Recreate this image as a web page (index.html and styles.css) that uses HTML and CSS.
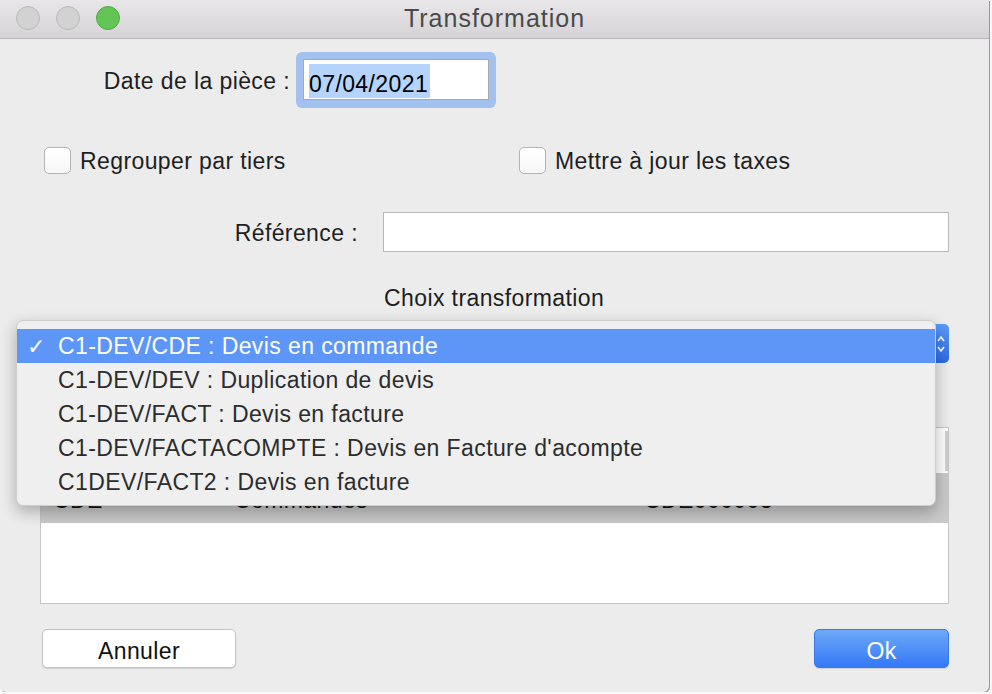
FILE: index.html
```html
<!DOCTYPE html>
<html lang="fr">
<head>
    <meta charset="UTF-8">
    <title>Transformation</title>
    <link rel="stylesheet" href="styles.css">
</head>
<body>
    <div class="window">
        <!-- barre de titre -->
        <div class="titlebar">
            <div class="lights">
                <span class="light"></span>
                <span class="light"></span>
                <span class="light green"></span>
            </div>
            <div class="title">Transformation</div>
            <div></div>
        </div>

        <div class="content">
            <div class="date-row">
                <label class="date-label">Date de la pièce :</label>
                <div class="focus-ring">
                    <div class="date-input"><span class="selected">07/04/2021</span></div>
                </div>
            </div>

            <div class="check-row">
                <div class="check first"><span class="box"></span>Regrouper par tiers</div>
                <div class="check"><span class="box"></span>Mettre à jour les taxes</div>
            </div>

            <div class="ref-row">
                <label class="ref-label">Référence :</label>
                <div class="text-input"></div>
            </div>

            <div class="choix">Choix transformation</div>

            <div class="popup">
                <span class="popup-cap">
                    <svg width="10" height="22" viewBox="0 0 10 22"><path d="M2 8 L5 4 L8 8 M2 14 L5 18 L8 14" fill="none" stroke="#fff" stroke-width="1.6"/></svg>
                </span>
            </div>

            <div class="table">
                <div class="table-head"><span class="resizer"></span></div>
                <div class="table-row">
                    <span class="col1">CDE</span>
                    <span class="col2">Commandes</span>
                    <span class="col3">CDE000003</span>
                </div>
            </div>

            <div class="buttons">
                <button class="btn">Annuler</button>
                <button class="btn primary">Ok</button>
            </div>
        </div>

        <!-- menu déroulant ouvert -->
        <div class="menu">
            <div class="menu-item active"><span class="tick">✓</span>C1-DEV/CDE : Devis en commande</div>
            <div class="menu-item"><span class="tick"></span>C1-DEV/DEV : Duplication de devis</div>
            <div class="menu-item"><span class="tick"></span>C1-DEV/FACT : Devis en facture</div>
            <div class="menu-item"><span class="tick"></span>C1-DEV/FACTACOMPTE : Devis en Facture d'acompte</div>
            <div class="menu-item"><span class="tick"></span>C1DEV/FACT2 : Devis en facture</div>
        </div>
    </div>
</body>
</html>
```
FILE: styles.css
```css
body {
    margin: 0;
    background: #f7f7f7;
    font-family: "Liberation Sans", Arial, sans-serif;
    font-size: 23px;
    letter-spacing: 0.4px;
    color: #1e1e1e;
}
.window {
    position: relative;
    width: 989px;
    height: 692px;
    background: #ececec;
    border-radius: 0 0 6px 6px;
    box-shadow: 1px 1px 0 #9a9a9a;
    overflow: hidden;
}
.titlebar {
    height: 38px;
    display: grid;
    grid-template-columns: 1fr auto 1fr;
    align-items: center;
    background: linear-gradient(#e9e7e9, #d5d3d5);
    border-bottom: 1px solid #b8b8b8;
}
.lights {
    display: flex;
    gap: 16px;
    padding-left: 16px;
    margin-top: -3px;
}
.light {
    width: 22px;
    height: 22px;
    border-radius: 50%;
    background: #d2d2d2;
    border: 1px solid #bababa;
}
.light.green {
    background: #62c555;
    border-color: #51ab45;
}
.title {
    font-size: 25px;
    letter-spacing: 1px;
    color: #4a4a4a;
    margin-top: -1px;
}
.date-row {
    display: flex;
    align-items: center;
    margin-top: 13px;
    height: 56px;
}
.date-label {
    width: 290px;
    text-align: right;
    margin-right: 6px;
    padding-top: 2px;
}
.focus-ring {
    width: 200px;
    height: 56px;
    box-sizing: border-box;
    padding: 7px 7px 8px 7px;
    background: #a3c1ee;
    border-radius: 6px;
}
.date-input {
    height: 41px;
    box-sizing: border-box;
    background: #fff;
    border: 1px solid #a8a8a8;
    padding: 4px 0 0 5px;
}
.selected {
    display: inline-block;
    background: #b5d4fb;
    color: #000;
    height: 34px;
    line-height: 40px;
    padding-right: 2px;
}
.check-row {
    display: flex;
    padding-left: 44px;
    margin-top: 39px;
    height: 27px;
}
.check {
    display: flex;
    align-items: center;
    gap: 9px;
    padding-top: 2px;
}
.check.first {
    width: 475px;
}
.box {
    width: 25px;
    height: 25px;
    border: 1px solid #b4b4b4;
    border-radius: 5px;
    background: linear-gradient(#ffffff, #f7f7f7);
    margin-top: -2px;
}
.ref-row {
    display: flex;
    align-items: center;
    margin-top: 38px;
    height: 40px;
}
.ref-label {
    width: 358px;
    text-align: right;
    margin-right: 25px;
    padding-top: 3px;
}
.text-input {
    width: 566px;
    height: 40px;
    box-sizing: border-box;
    background: #fff;
    border: 1px solid #b8b8b8;
}
.choix {
    margin-top: 33px;
    padding-left: 384px;
    height: 26px;
    line-height: 26px;
}
.popup {
    margin: 13px 0 0 40px;
    width: 909px;
    height: 39px;
    box-sizing: border-box;
    background: #fff;
    border-radius: 5px;
    border: 1px solid #c0c0c0;
    display: flex;
    justify-content: flex-end;
}
.popup-cap {
    width: 22px;
    margin: -1px -1px -1px 0;
    border-radius: 0 5px 5px 0;
    background: linear-gradient(#5a9bf7, #2c6be8);
    display: flex;
    align-items: center;
    justify-content: flex-end;
    padding-right: 3px;
}
.table {
    margin: 64px 0 0 40px;
    width: 909px;
    height: 177px;
    box-sizing: border-box;
    border: 1px solid #c6c6c6;
    background: #fff;
}
.table-head {
    height: 45px;
    display: flex;
    justify-content: flex-end;
    padding: 3px 0 2px;
    box-sizing: border-box;
}
.resizer {
    width: 3px;
    background: #cfcfcf;
}
.table-row {
    height: 50px;
    background: #c9c9c9;
    display: flex;
    align-items: center;
    color: #111;
    padding-top: 5px;
    box-sizing: border-box;
}
.col1 { width: 181px; padding-left: 12px; }
.col2 { width: 410px; }
.buttons {
    display: flex;
    justify-content: space-between;
    margin-top: 25px;
    padding: 0 40px 0 42px;
}
.btn {
    font-family: "Liberation Sans", Arial, sans-serif;
    font-size: 23px;
    letter-spacing: 0.4px;
    width: 194px;
    height: 39px;
    background: #fff;
    color: #111;
    border: 1px solid #c3c3c3;
    border-radius: 5px;
    box-shadow: 0 1px 1px rgba(0, 0, 0, 0.12);
    padding: 6px 0 0;
}
.btn.primary {
    width: 135px;
    color: #fff;
    border-color: #3a7ae8;
    background: linear-gradient(#6ea8f8, #3479f6);
}
.menu {
    position: absolute;
    left: 16px;
    top: 320px;
    width: 920px;
    height: 186px;
    box-sizing: border-box;
    padding-top: 8px;
    background: #efefef;
    border: 1px solid #cdcdcd;
    border-radius: 7px;
    box-shadow: 0 6px 16px rgba(0, 0, 0, 0.28);
}
.menu-item {
    height: 34px;
    display: flex;
    align-items: center;
    color: #2c2c2c;
}
.menu-item.active {
    background: #5e96f7;
    color: #fff;
}
.tick {
    width: 31px;
    padding-left: 10px;
    font-family: "DejaVu Sans", sans-serif;
    font-size: 22px;
    font-weight: bold;
}
```
